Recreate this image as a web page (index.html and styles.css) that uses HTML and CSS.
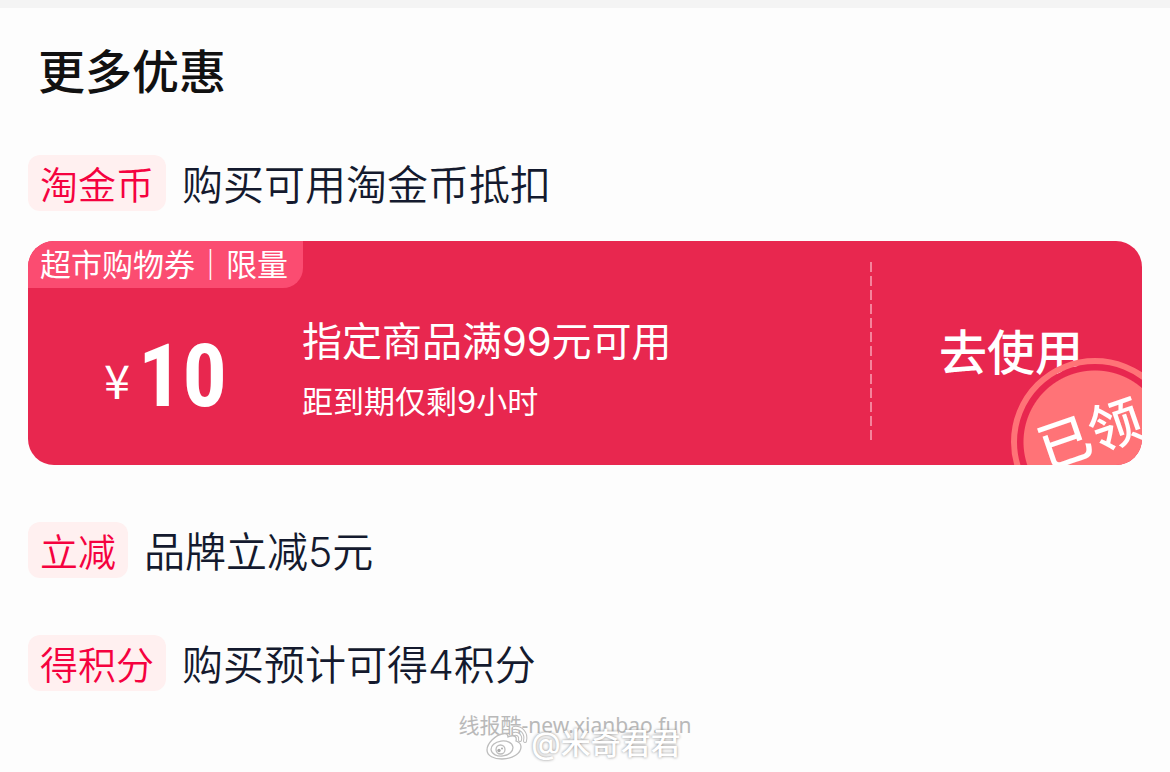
FILE: index.html
```html
<!DOCTYPE html>
<html lang="zh-CN">
<head>
    <meta charset="UTF-8">
    <meta name="viewport" content="width=device-width, initial-scale=1.0">
    <title>更多优惠</title>
    <link rel="stylesheet" href="styles.css">
</head>
<body>
<main class="panel">
    <h1 class="title">更多优惠</h1>

    <div class="row">
        <span class="tag">淘金币</span>
        <span class="desc">购买可用淘金币抵扣</span>
    </div>

    <section class="coupon">
        <div class="coupon-label">超市购物券｜限量</div>
        <div class="price"><span class="yen">¥</span><span class="num">10</span></div>
        <div class="info">
            <div class="info-main">指定商品满99元可用</div>
            <div class="info-sub">距到期仅剩9小时</div>
        </div>
        <div class="action">
            <button type="button" class="use-btn">去使用</button>
        </div>
        <div class="stamp"><span class="stamp-text">已领</span></div>
    </section>

    <div class="row">
        <span class="tag">立减</span>
        <span class="desc">品牌立减5元</span>
    </div>

    <div class="row">
        <span class="tag">得积分</span>
        <span class="desc">购买预计可得4积分</span>
    </div>

    <div class="watermark">
        <div class="mark-site">线报酷-new.xianbao.fun</div>
        <div class="mark-user">
            <svg class="weibo" viewBox="0 0 44 36" width="44" height="36">
                <g fill="#fff" stroke="#bdbdbd" stroke-width="1.3">
                    <path d="M17 9C11 10 2 18 2 25c0 6 7 9 15 9 11 0 19-6 19-12 0-3-2-5-5-6 1-4-1-7-8-4 0-3-2-4-6-3z"/>
                    <ellipse cx="17" cy="23.5" rx="11" ry="7.5" transform="rotate(-8 17 23.5)"/>
                    <circle cx="15.5" cy="24.5" r="4.5"/>
                </g>
                <circle cx="14" cy="25.5" r="1.7" fill="#aaa"/>
                <circle cx="17" cy="23.5" r="1" fill="#aaa"/>
                <path d="M29 3c7-1 13 5 11 13M29 9c4-1 7 2 6 6" fill="none" stroke="#bdbdbd" stroke-width="4" stroke-linecap="round"/>
                <path d="M29 3c7-1 13 5 11 13M29 9c4-1 7 2 6 6" fill="none" stroke="#fff" stroke-width="2" stroke-linecap="round"/>
            </svg>
            <span>@米奇君君</span>
        </div>
    </div>
</main>
</body>
</html>
```
FILE: styles.css
```css
* {
    box-sizing: border-box;
}

body {
    margin: 0;
    background: #fdfdfd;
    font-family: Inter, "Noto Sans CJK SC", sans-serif;
    color: #141a2e;
}

.panel {
    position: relative;
    border-top: 8px solid #f4f4f4;
    padding: 32px 28px 24px;
}

.title {
    margin: 0 0 51px;
    padding-left: 10px;
    font-size: 47px;
    font-weight: 500;
    line-height: 64px;
    color: #111;
}

.row {
    display: flex;
    align-items: center;
    gap: 16px;
    margin-bottom: 57px;
}

.tag {
    padding: 4px 12px 0;
    border-radius: 12px;
    background: #fff0f0;
    color: #f5023f;
    font-size: 38px;
    font-weight: 350;
    line-height: 52px;
}

.desc {
    padding-top: 4px;
    font-size: 41px;
    font-weight: 350;
    line-height: 52px;
}

/* coupon */
.coupon {
    position: relative;
    display: flex;
    height: 224px;
    margin: -27px 0 57px;
    border-radius: 26px;
    overflow: hidden;
    background: #e8274f;
    color: #fff;
}

.coupon-label {
    position: absolute;
    left: 0;
    top: 0;
    padding: 1px 15px 0 12px;
    border-radius: 0 0 20px 0;
    background: #fb4c71;
    font-size: 31px;
    line-height: 46px;
}

.price {
    display: flex;
    align-items: flex-start;
    gap: 8px;
    width: 274px;
    padding: 86px 0 0 76px;
}

.yen {
    font-family: "Noto Sans CJK SC", sans-serif;
    font-size: 47px;
    line-height: 104px;
}

.num {
    font-family: "Roboto Condensed", Roboto, sans-serif;
    font-size: 88px;
    font-weight: 700;
    line-height: 98px;
}

.info {
    flex: 1;
    padding-top: 72px;
}

.info-main {
    font-size: 40px;
    line-height: 58px;
}

.info-sub {
    margin-top: 8px;
    font-size: 31px;
    line-height: 46px;
}

.action {
    position: relative;
    display: flex;
    align-items: center;
    justify-content: center;
    width: 272px;
    padding-left: 10px;
}

/* dashed separator */
.action::before {
    content: "";
    position: absolute;
    left: 0;
    top: 21px;
    bottom: 23px;
    width: 2px;
    background: repeating-linear-gradient(#f5839b 0 10px, transparent 10px 14px);
}

.use-btn {
    border: 0;
    padding: 0;
    background: none;
    color: #fff;
    font: inherit;
    font-size: 48px;
    font-weight: 500;
    line-height: 64px;
    cursor: pointer;
}

.stamp {
    position: absolute;
    right: -37px;
    bottom: -61px;
    width: 168px;
    height: 168px;
    border: 6px solid #ff7377;
    border-radius: 50%;
    background: radial-gradient(circle closest-side, #ff7377 71px, #e8274f 72px) padding-box;
}

.stamp-text {
    position: absolute;
    left: 20px;
    top: 34px;
    font-size: 53px;
    font-weight: 500;
    line-height: 72px;
    white-space: nowrap;
    transform: rotate(-19deg);
}

/* watermark */
.watermark {
    position: absolute;
    left: 0;
    right: 0;
    bottom: 0;
    height: 60px;
    text-align: center;
}

.mark-site {
    padding-right: 20px;
    color: #b9b9b9;
    font-family: "Noto Sans", "Noto Sans CJK SC", sans-serif;
    font-size: 21px;
    line-height: 26px;
}

.mark-user {
    display: flex;
    align-items: center;
    justify-content: center;
    gap: 2px;
    margin-top: -13px;
    padding-right: 4px;
    color: #fff;
    font-size: 30px;
    font-weight: 500;
    line-height: 36px;
    text-shadow: 0 0 3px #888;
}
```
